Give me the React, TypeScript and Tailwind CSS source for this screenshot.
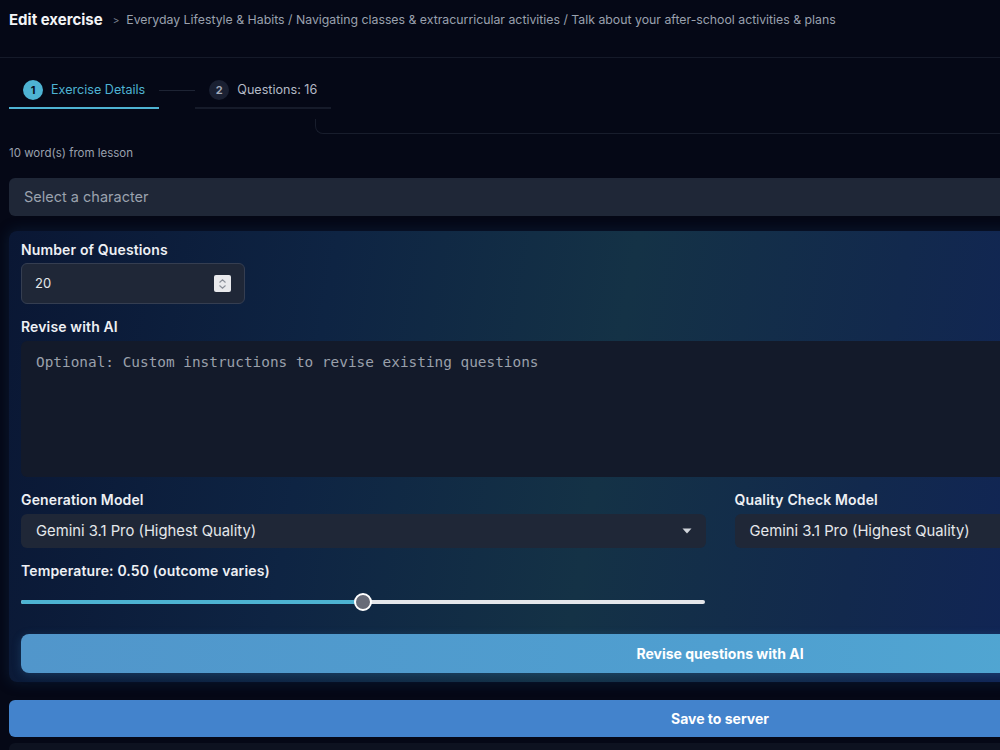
import { useState } from "react"

function Step({ n, label, active }: { n: number; label: string; active?: boolean }) {
  return (
    <div
      className={
        "flex items-center gap-[8px] pt-[22px] pb-[7px] px-[14px] border-b-2 " +
        (active ? "border-[#4eb3d3]" : "border-[#161b2a]")
      }
    >
      <div
        className={
          "w-[20px] h-[20px] rounded-full flex items-center justify-center text-[11px] font-bold " +
          (active ? "bg-[#4eb3d3] text-[#07101f]" : "bg-[#1a2032] text-[#a3a9b8]")
        }
      >
        {n}
      </div>
      <span className={"text-[12.6px] " + (active ? "text-[#4eb3d3]" : "text-[#b4bac6]")}>{label}</span>
    </div>
  )
}

function Label({ children, className = "" }: { children: React.ReactNode; className?: string }) {
  return (
    <label className={"block text-[14px] font-semibold text-[#eef0f4] leading-[18px] tracking-[0.01em] " + className}>
      {children}
    </label>
  )
}

function ModelSelect() {
  return (
    <div className="mt-[5px] h-[34px] rounded-md bg-[#1f2737] flex items-center justify-between pl-[15px] pr-[14px] text-[14.8px] text-[#e5e7eb]">
      <span>Gemini 3.1 Pro (Highest Quality)</span>
      <svg width="10" height="6" viewBox="0 0 10 6">
        <path d="M0.5 0.5 H9.5 L5 5.5 Z" fill="#d1d5db" />
      </svg>
    </div>
  )
}

export default function App() {
  const [temp] = useState(0.5)

  return (
    <div className="h-[750px] w-[1000px] overflow-hidden bg-[#050816] font-['Inter',sans-serif] text-white">
      <div className="w-[1440px]">
        {/* header */}
        <div className="h-[58px] px-[9px] pt-[10px] border-b border-[#151a29] flex items-start gap-[10px]">
          <h1 className="text-[15px] font-bold text-[#f3f4f6] leading-[20px]">Edit exercise</h1>
          <div className="flex items-center gap-[7px] text-[12.3px] text-[#9aa1ae] leading-[20px]">
            <span className="text-[10px] text-[#7c8392]">&gt;</span>
            <span>
              Everyday Lifestyle &amp; Habits / Navigating classes &amp; extracurricular activities / Talk about your
              after-school activities &amp; plans
            </span>
          </div>
        </div>

        {/* steps */}
        <div className="flex items-start px-[9px]">
          <Step n={1} label="Exercise Details" active />
          <div className="w-[36px] h-px bg-[#1e2434] mt-[32px]" />
          <Step n={2} label="Questions: 16" />
        </div>
        <div className="ml-[315px] h-[15px] mt-[10px] border-l border-b border-[#181d2c] rounded-bl-[8px]" />

        <div className="px-[9px]">
          <p className="mt-[12px] text-[11.5px] text-[#9aa1ae] leading-[14px]">10 word(s) from lesson</p>

          <div className="mt-[18px] h-[38px] rounded-md bg-[#1f2737] flex items-center px-[15px] text-[14.5px] text-[#9ba2ae]">
            Select a character
          </div>

          {/* ai panel */}
          <div className="mt-[15px] rounded-lg px-[12px] pt-[10px] pb-[9px] bg-[linear-gradient(100deg,#0a1734_0%,#0e2443_22%,#143246_42%,#12294d_60%,#10225a_80%,#0d1c4d_100%)] shadow-[0_0_14px_rgba(20,60,110,0.35)]">
            <Label>Number of Questions</Label>
            <div className="mt-[4px] w-[224px] h-[41px] rounded-md bg-[#1f2737] border border-[#353e51] flex items-center justify-between pl-[13px] pr-[13px]">
              <span className="text-[13px] text-[#e5e7eb]">20</span>
              <div className="w-[17px] h-[17px] bg-[#e8e9ec] rounded-[2px] flex flex-col items-center justify-center">
                <svg width="9" height="12" viewBox="0 0 9 12" fill="none" stroke="#8a8f99" strokeWidth="1.1">
                  <path d="M1.5 4.5 L4.5 1.8 L7.5 4.5" />
                  <path d="M1.5 7.5 L4.5 10.2 L7.5 7.5" />
                </svg>
              </div>
            </div>

            <Label className="mt-[14px]">Revise with AI</Label>
            <div className="mt-[5px] h-[136px] rounded-md bg-[#131a2a] px-[15px] pt-[11px] font-['DejaVu_Sans_Mono',monospace] text-[14.4px] text-[#9aa0ab]">
              Optional: Custom instructions to revise existing questions
            </div>

            <div className="mt-[14px] grid grid-cols-2 gap-[29px]">
              <div>
                <Label>Generation Model</Label>
                <ModelSelect />
              </div>
              <div>
                <Label>Quality Check Model</Label>
                <ModelSelect />
              </div>
            </div>

            <Label className="mt-[14px]">Temperature: {temp.toFixed(2)} (outcome varies)</Label>
            <div className="relative mt-[13px] w-[684px] h-[18px] flex items-center">
              <div className="w-full h-[4px] rounded-full bg-[#e4e6ea] overflow-hidden">
                <div className="h-full bg-[#4db3d2]" style={{ width: `${temp * 100}%` }} />
              </div>
              <div
                className="absolute top-0 w-[18px] h-[18px] -ml-[9px] rounded-full bg-[#676b78] border-2 border-white"
                style={{ left: `${temp * 100}%` }}
              />
            </div>

            <button className="mt-[23px] w-full h-[39px] rounded-lg bg-[linear-gradient(90deg,#5196cb_0%,#4f9fd0_50%,#52aed4_100%)] text-[14px] font-bold text-white shadow-[0_2px_10px_rgba(60,140,200,0.25)]">
              Revise questions with AI
            </button>
          </div>

          <button className="mt-[18px] w-full h-[37px] rounded-md bg-[#4383cc] text-[14px] font-bold text-white">
            Save to server
          </button>
          <div className="mt-[6px] h-[20px] rounded-t-md bg-[#0d1220]" />
        </div>
      </div>
    </div>
  )
}
